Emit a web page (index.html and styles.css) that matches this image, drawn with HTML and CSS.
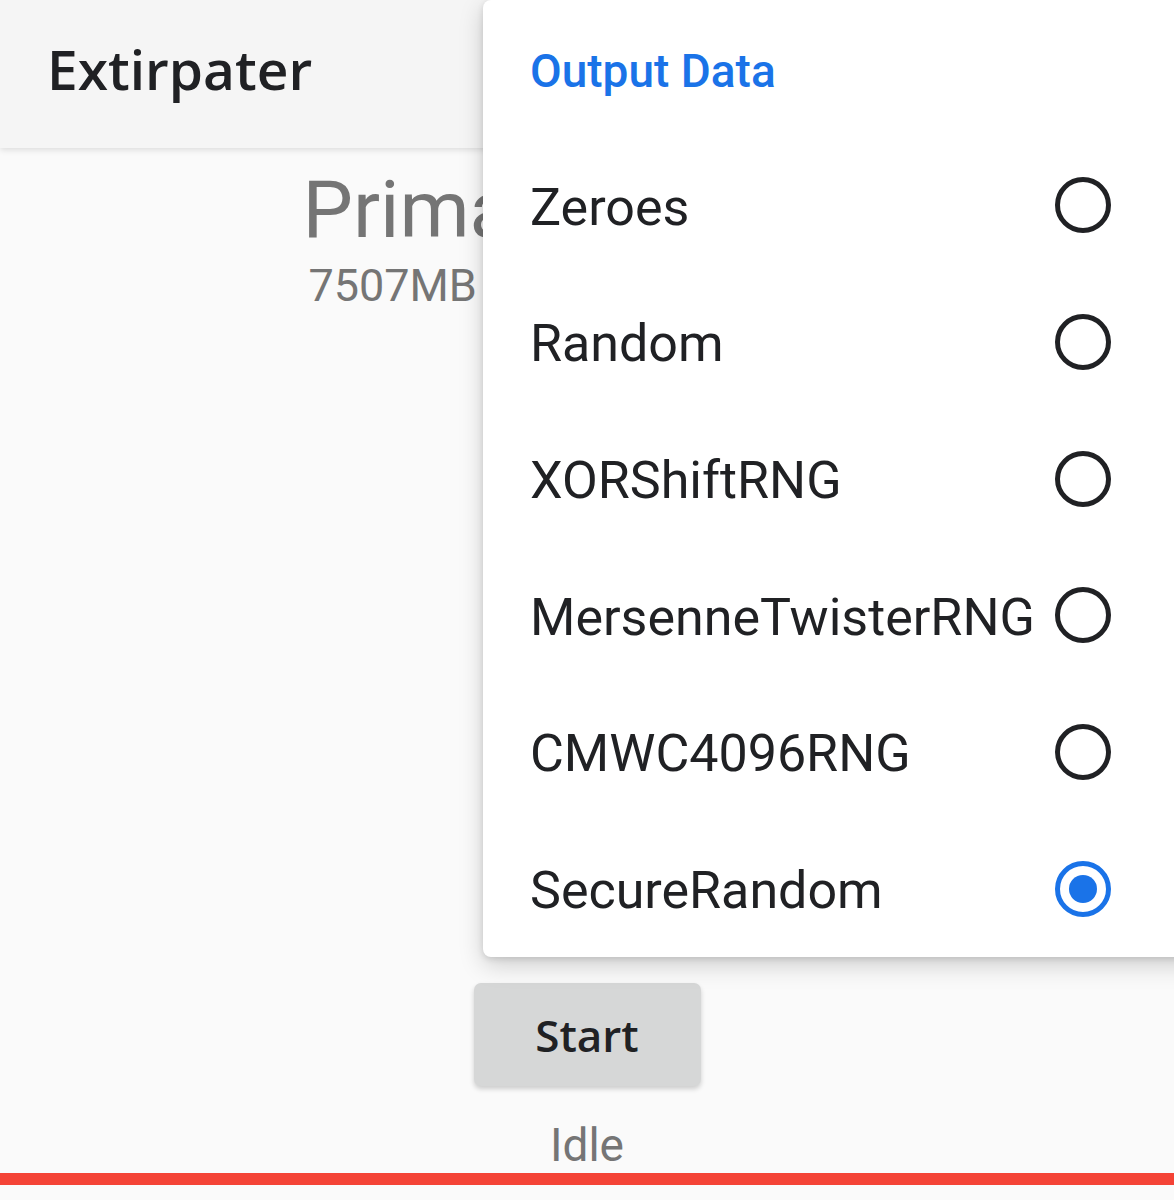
FILE: index.html
```
<!DOCTYPE html>
<html>
<head>
<meta charset="utf-8">
<link rel="stylesheet" href="styles.css">
</head>
<body>
<div class="screen">
  <header class="appbar"><h1 class="title">Extirpater</h1></header>
  <main class="content">
    <div class="storage-block">
      <div class="storage">Primary Storage</div>
      <div class="free">7507MB free</div>
    </div>
    <div class="spacer"></div>
    <button class="start">Start</button>
    <div class="status">Idle</div>
  </main>
  <div class="progress"></div>
  <div class="menu">
    <div class="menu-title">Output Data</div>
    <div class="item"><span class="label">Zeroes</span><span class="radio"></span></div>
    <div class="item"><span class="label">Random</span><span class="radio"></span></div>
    <div class="item"><span class="label">XORShiftRNG</span><span class="radio"></span></div>
    <div class="item"><span class="label">MersenneTwisterRNG</span><span class="radio"></span></div>
    <div class="item"><span class="label">CMWC4096RNG</span><span class="radio"></span></div>
    <div class="item"><span class="label">SecureRandom</span><span class="radio checked"></span></div>
  </div>
</div>
</body>
</html>
```
FILE: styles.css
```
html, body { margin: 0; padding: 0; }
body { background: #fafafa; font-family: Roboto, "Liberation Sans", sans-serif; }
.screen { position: relative; width: 1174px; height: 1200px; overflow: hidden; display: flex; flex-direction: column; }
.appbar { height: 148px; background: #f5f5f5; box-shadow: 0 2px 6px rgba(0,0,0,0.12); display: flex; align-items: center; padding-left: 47px; padding-bottom: 12px; box-sizing: border-box; flex-shrink: 0; position: relative; z-index: 1; }
.title { margin: 0; font-family: "Open Sans", sans-serif; font-weight: 600; font-size: 55px; color: #202124; }
.content { display: flex; flex-direction: column; align-items: center; flex: 1; }
.storage-block { display: flex; flex-direction: column; align-items: flex-start; margin-top: 14px; }
.storage { font-size: 80px; color: #757575; line-height: 96px; margin-left: 2px; }
.free { font-size: 45px; color: #757575; line-height: 56px; margin-left: 8px; }
.spacer { flex: 1; }
.start { width: 227px; height: 103px; border: none; border-radius: 7px; background: #d6d7d7; box-shadow: 0 3px 5px rgba(0,0,0,0.18); font-family: "Open Sans", sans-serif; font-weight: 600; font-size: 44px; color: #202124; }
.status { margin-top: 33px; margin-bottom: 2px; font-size: 46px; color: #757575; line-height: 52px; }
.progress { height: 12px; background: #f44336; margin-bottom: 15px; flex-shrink: 0; }
.menu { position: absolute; left: 483px; top: 0; width: 720px; height: 957px; background: #fff; border-radius: 8px; box-shadow: 0 8px 24px rgba(0,0,0,0.18), 0 2px 6px rgba(0,0,0,0.12); z-index: 2; box-sizing: border-box; padding: 0 0 0 47px; display: flex; flex-direction: column; }
.menu-title { height: 137px; display: flex; align-items: center; font-weight: 500; font-size: 46px; color: #1a73e8; padding-top: 6px; box-sizing: border-box; }
.item { height: 137px; display: flex; align-items: center; justify-content: space-between; width: 582px; padding-top: 4px; box-sizing: border-box; }
.label { font-size: 52px; color: #202124; }
.radio { width: 46px; height: 46px; border: 5px solid #202124; border-radius: 50%; box-sizing: content-box; position: relative; flex-shrink: 0; margin-top: -4px; margin-right: 1px; }
.radio.checked { border-color: #1a73e8; }
.radio.checked::after { content: ""; position: absolute; left: 9px; top: 9px; width: 28px; height: 28px; border-radius: 50%; background: #1a73e8; }
```
